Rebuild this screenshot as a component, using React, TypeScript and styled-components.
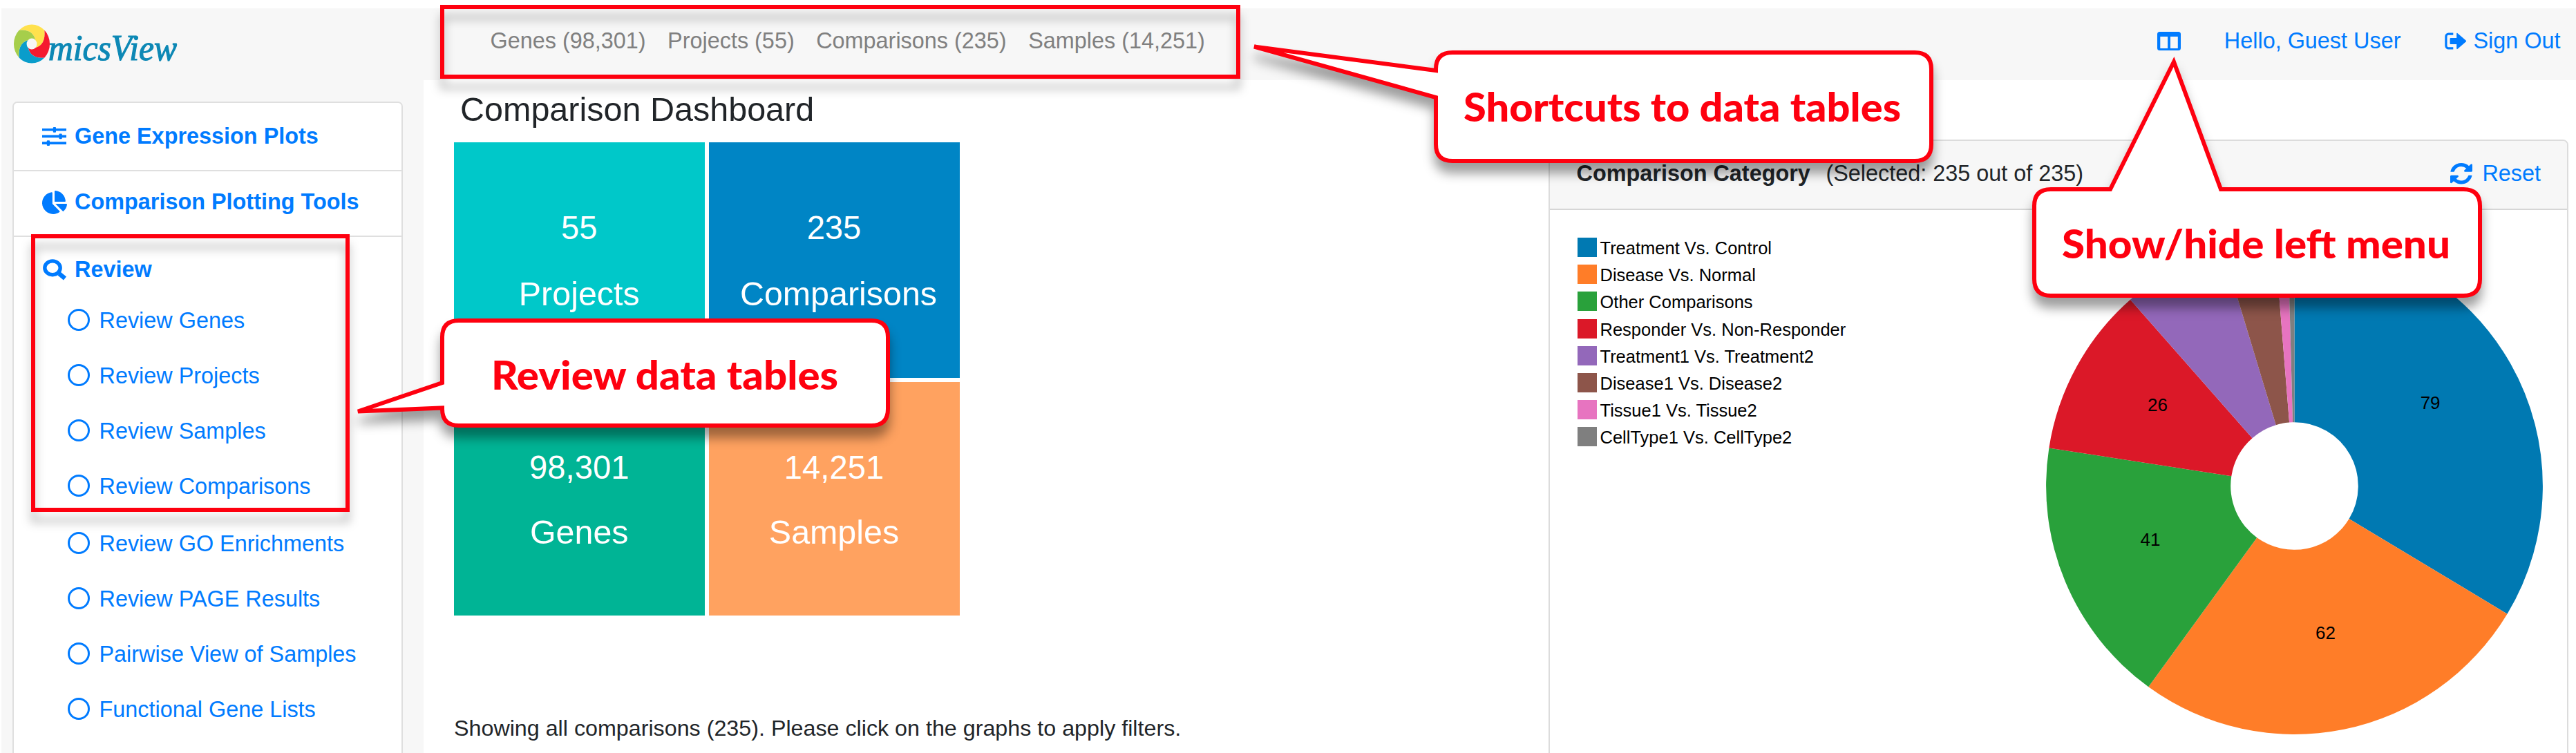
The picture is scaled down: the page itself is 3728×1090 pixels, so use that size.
import React from "react";
import styled, { createGlobalStyle } from "styled-components";
import { FaChartPie } from "react-icons/fa";

const LINK = "#007bff";
const RED = "#fe000f";
const INK = "#212529";

const GlobalStyle = createGlobalStyle`
  *, *::before, *::after { box-sizing: border-box; }
  html, body { margin: 0; padding: 0; background: #fff; }
  body {
    width: 3728px;
    height: 1090px;
    overflow: hidden;
    font-family: "Liberation Sans", Arial, sans-serif;
    font-size: 32.4px;
    color: ${INK};
  }
`;

const Page = styled.div`
  position: relative;
  display: flex;
  flex-direction: column;
  width: 3728px;
  height: 1090px;
  padding: 12px 0 0 2px;
  overflow: hidden;
  background: #fff;
`;

const TopBar = styled.header`
  display: flex;
  align-items: flex-start;
  flex: none;
  height: 104px;
  padding: 0 22.5px 0 16px;
  background: #f7f7f7;
  white-space: nowrap;
`;

const LogoSvg = styled.svg`
  display: block;
  flex: none;
  margin-top: 11px;
`;

const Shortcuts = styled.nav`
  display: flex;
  gap: 31.5px;
  margin: 27px 0 0 441.5px;
  line-height: 40px;
  color: #808080;
`;

const Account = styled.div`
  display: flex;
  align-items: center;
  margin: 27px 0 0 auto;
  line-height: 40px;
  color: ${LINK};
`;

const UserName = styled.span`
  margin: 0 64px 0 62.5px;
`;

const SignOut = styled.a`
  display: flex;
  align-items: center;
  gap: 9px;
`;

const Body = styled.div`
  display: flex;
  flex: 1;
  min-height: 0;
`;

const Sidebar = styled.aside`
  flex: none;
  width: 611px;
  padding: 31px 0 0 16px;
  background: #f7f7f7;
`;

const MenuCard = styled.div`
  width: 565px;
  height: 1000px;
  border: 2px solid #dfdfdf;
  border-radius: 7px;
  background: #fff;
`;

const MenuHeading = styled.div<{ $height: number; $top?: number; $bottom?: number; $divided?: boolean }>`
  display: flex;
  align-items: center;
  box-sizing: content-box;
  height: ${(p) => p.$height - (p.$top ?? 0) - (p.$bottom ?? 0)}px;
  padding: ${(p) => p.$top ?? 0}px 0 ${(p) => p.$bottom ?? 0}px 41px;
  border-bottom: ${(p) => (p.$divided ? "2px solid #dfdfdf" : "none")};
  font-weight: 700;
  color: ${LINK};
  white-space: nowrap;
`;

const IconSlot = styled.span`
  display: flex;
  flex: none;
  width: 47px;
`;

const MenuItem = styled.a<{ $gap?: boolean }>`
  display: flex;
  align-items: center;
  height: 80px;
  margin-top: ${(p) => (p.$gap ? 2.6 : 0)}px;
  padding-left: 78px;
  color: ${LINK};
  white-space: nowrap;
`;

const Ring = styled.span`
  flex: none;
  width: 32px;
  height: 32px;
  margin: 0 13.5px 3px 0;
  border: 3px solid ${LINK};
  border-radius: 50%;
`;

const Main = styled.main`
  display: flex;
  flex: 1;
  min-width: 0;
  padding-left: 44px;
`;

const Overview = styled.section`
  display: flex;
  flex-direction: column;
  width: 1584px;
  padding-top: 13px;
`;

const Title = styled.h1`
  margin: 0 0 19px 9px;
  font-size: 48.5px;
  font-weight: 400;
  line-height: 58px;
`;

const Tiles = styled.div`
  display: grid;
  grid-template-columns: 362.5px 363px;
  grid-template-rows: 341px 338px;
  gap: 6px;
`;

const Tile = styled.div<{ $color: string; $gap: number }>`
  display: flex;
  flex-direction: column;
  align-items: center;
  gap: ${(p) => p.$gap}px;
  padding-top: 95px;
  background: ${(p) => p.$color};
  color: #fff;
  line-height: 58px;
`;

const TileCount = styled.span`
  font-size: 47.2px;
`;

const TileLabel = styled.span<{ $indent?: number }>`
  padding-left: ${(p) => p.$indent ?? 0}px;
  font-size: 48.4px;
`;

const Note = styled.p`
  margin: 143px 0 0;
  font-size: 32.25px;
  line-height: 40px;
`;

const ChartCard = styled.section`
  width: 1476px;
  height: 1000px;
  margin-top: 86px;
  border: 2px solid #dcdcdc;
  border-radius: 8px;
`;

const ChartHeader = styled.div`
  display: flex;
  align-items: center;
  height: 100px;
  padding: 0 38px 3px 38.5px;
  border-bottom: 2px solid #d6d6d6;
  border-radius: 6px 6px 0 0;
  background: #f7f7f7;
  white-space: nowrap;
`;

const ChartName = styled.strong`
  margin-right: 22.5px;
`;

const Reset = styled.a`
  display: flex;
  align-items: center;
  gap: 14px;
  margin-left: auto;
  color: ${LINK};
`;

const ChartBody = styled.div`
  display: flex;
  justify-content: space-between;
  padding: 40px 35px 0 40px;
`;

const Legend = styled.ul`
  display: flex;
  flex-direction: column;
  gap: 11.2px;
  margin: 0;
  padding: 0;
  list-style: none;
  color: #000;
  font-size: 25.5px;
  line-height: 28px;
`;

const LegendRow = styled.li`
  display: flex;
  gap: 4.5px;
  height: 28px;
  white-space: nowrap;

  span { padding-top: 1px; }
`;

const Swatch = styled.i<{ $color: string }>`
  width: 28px;
  height: 28px;
  background: ${(p) => p.$color};
`;

const Frame = styled.div<{ $x: number; $y: number; $w: number; $h: number }>`
  position: absolute;
  left: ${(p) => p.$x}px;
  top: ${(p) => p.$y}px;
  width: ${(p) => p.$w}px;
  height: ${(p) => p.$h}px;
  border: 6px solid ${RED};
  filter: drop-shadow(0 15px 7px rgba(0, 0, 0, 0.28));
  pointer-events: none;
`;

const CalloutLayer = styled.svg`
  position: absolute;
  left: 0;
  top: 0;
  pointer-events: none;

  path {
    fill: #fff;
    stroke: ${RED};
    stroke-width: 6;
    filter: drop-shadow(0 15px 8px rgba(0, 0, 0, 0.38));
  }

  text {
    font-family: Lato, "Open Sans", sans-serif;
    font-weight: 900;
    font-size: 57px;
    fill: ${RED};
  }
`;

const slices = [
  { name: "Treatment Vs. Control", value: 79, color: "#0079b2" },
  { name: "Disease Vs. Normal", value: 62, color: "#ff7d28" },
  { name: "Other Comparisons", value: 41, color: "#29a13b" },
  { name: "Responder Vs. Non-Responder", value: 26, color: "#db1828" },
  { name: "Treatment1 Vs. Treatment2", value: 16, color: "#9368ba" },
  { name: "Disease1 Vs. Disease2", value: 8, color: "#8d554a" },
  { name: "Tissue1 Vs. Tissue2", value: 2, color: "#e774c0" },
  { name: "CellType1 Vs. CellType2", value: 1, color: "#7f7f7f" },
];

const menuItems = [
  "Review Genes",
  "Review Projects",
  "Review Samples",
  "Review Comparisons",
  "Review GO Enrichments",
  "Review PAGE Results",
  "Pairwise View of Samples",
  "Functional Gene Lists",
];

const polar = (r: number, deg: number) => {
  const a = (deg * Math.PI) / 180;
  return `${(r * Math.cos(a)).toFixed(2)} ${(r * Math.sin(a)).toFixed(2)}`;
};

function Logo() {
  const petals: [number, string][] = [
    [-45, "#ffe14d"],
    [45, "#f5192f"],
    [135, "#0a9dcb"],
    [225, "#a6ce4b"],
  ];
  return (
    <LogoSvg width={250} height={84} viewBox="18 23 250 84">
      <g transform="translate(46 63.6) scale(0.93 1)">
        {petals.map(([a, color]) => (
          <path
            key={a}
            fill={color}
            d={`M${polar(28, a - 90)} A28 28 0 0 1 ${polar(28, a)} Q${polar(22, a + 48)} ${polar(8, a + 90)} A8 8 0 0 0 ${polar(8, a)} Q${polar(22, a - 42)} ${polar(28, a - 90)}Z`}
          />
        ))}
      </g>
      <text
        x={70}
        y={86.5}
        textLength={186}
        lengthAdjust="spacingAndGlyphs"
        fontFamily='"Liberation Serif", "Times New Roman", serif'
        fontStyle="italic"
        fontSize={52}
        fill="#0d88b5"
        stroke="#0d88b5"
        strokeWidth={1.2}
      >
        micsView
      </text>
    </LogoSvg>
  );
}

const SlidersIcon = () => (
  <svg width="35" height="27" viewBox="0 0 35 27" fill="currentColor">
    <path d="M0 2h35v3.6H0zM0 11.6h35v3.6H0zM0 21.3h35v3.6H0z" />
    <rect x="15.8" y="0" width="4.2" height="7.7" rx="1" />
    <rect x="24.5" y="9.6" width="4.2" height="7.7" rx="1" />
    <rect x="6.8" y="19.3" width="4.2" height="7.7" rx="1" />
  </svg>
);

const SearchIcon = () => (
  <svg width="36" height="31" viewBox="0 0 36 31" fill="none" stroke="currentColor">
    <ellipse cx="15" cy="12.8" rx="11.2" ry="9.9" strokeWidth="5.4" />
    <path d="M24.5 21L33 28" strokeWidth="6.4" />
  </svg>
);

const ColumnsIcon = () => (
  <svg width="34" height="27" viewBox="0 0 34 27" fill="currentColor">
    <path
      fillRule="evenodd"
      d="M3.5 0h27A3.5 3.5 0 0 1 34 3.5v20a3.5 3.5 0 0 1-3.5 3.5h-27A3.5 3.5 0 0 1 0 23.5v-20A3.5 3.5 0 0 1 3.5 0ZM4.3 7v17h10.8V7ZM19 7v17h10.8V7Z"
    />
  </svg>
);

const SignOutIcon = () => (
  <svg width="32" height="25" viewBox="0 0 32 25">
    <path d="M12.3 2.2H5.5a3.6 3.6 0 0 0-3.6 3.6v13.4a3.6 3.6 0 0 0 3.6 3.6h6.8" fill="none" stroke="currentColor" strokeWidth="3.2" />
    <path d="M8.6 8h8.6V2.2q0-2.4 1.8-.8l11.6 10q1 1 0 2L19 23.6q-1.8 1.6-1.8-.8V17H8.6q-1 0-1-1V9q0-1 1-1Z" fill="currentColor" />
  </svg>
);

const RefreshIcon = () => (
  <svg width="32" height="30.5" viewBox="0 0 1536 1536" preserveAspectRatio="none" fill="currentColor">
    <path d="M1511 928q0 5-1 7-64 268-268 434.500T764 1536q-146 0-282.500-55T238 1324l-129 129q-19 19-45 19t-45-19-19-45V960q0-26 19-45t45-19h448q26 0 45 19t19 45-19 45l-137 137q71 66 161 102t187 36q134 0 250-65t186-179q11-17 53-117 8-23 30-23h192q13 0 22.500 9.500t9.500 22.500zm25-800v448q0 26-19 45t-45 19h-448q-26 0-45-19t-19-45 19-45l138-138Q969 256 768 256q-134 0-250 65T332 500q-11 17-53 117-8 23-30 23H50q-13 0-22.500-9.500T18 608v-7q65-268 270-434.500T768 0q146 0 284 55.500T1297 212l130-129q19-19 45-19t45 19 19 45z" />
  </svg>
);

function Donut() {
  const R = 359.4;
  const r = 92.3;
  const total = slices.reduce((sum, s) => sum + s.value, 0);
  let from = -90;
  return (
    <svg width={719} height={719} viewBox="-359.5 -359.5 719 719">
      {slices.map((s) => {
        const start = from;
        const end = start + (s.value / total) * 360;
        from = end;
        const mid = ((start + end) / 2) * (Math.PI / 180);
        const m = (R + r) / 2;
        return (
          <g key={s.name}>
            <path
              fill={s.color}
              d={`M${polar(R, start)} A${R} ${R} 0 0 1 ${polar(R, end)} L${polar(r, end)} A${r} ${r} 0 0 0 ${polar(r, start)}Z`}
            />
            {s.value > 20 && (
              <text x={m * Math.cos(mid)} y={m * Math.sin(mid)} textAnchor="middle" fontSize={26} fill="#000">
                {s.value}
              </text>
            )}
          </g>
        );
      })}
    </svg>
  );
}

function Callouts() {
  return (
    <CalloutLayer width={3728} height={1090} viewBox="0 0 3728 1090">
      <path d="M664 464H1261Q1285 464 1285 488V592Q1285 616 1261 616H664Q640 616 640 592V590.5L518 595.5L640 554V488Q640 464 664 464Z" />
      <text x={711} y={563.5} textLength={502} lengthAdjust="spacingAndGlyphs">
        Review data tables
      </text>
      <path d="M2102 76H2771Q2795 76 2795 100V209Q2795 233 2771 233H2102Q2078 233 2078 209V141L1815 67.5L2078 102V100Q2078 76 2102 76Z" />
      <text x={2118} y={175.5} textLength={633} lengthAdjust="spacingAndGlyphs">
        Shortcuts to data tables
      </text>
      <path d="M2968 274H3054L3146 89.5L3214 274H3565Q3589 274 3589 298V404Q3589 428 3565 428H2968Q2944 428 2944 404V298Q2944 274 2968 274Z" />
      <text x={2984} y={374} textLength={562} lengthAdjust="spacingAndGlyphs">
        Show/hide left menu
      </text>
    </CalloutLayer>
  );
}

export default function App() {
  return (
    <>
      <GlobalStyle />
      <Page>
        <TopBar>
          <Logo />
          <Shortcuts>
            <span>Genes (98,301)</span>
            <span>Projects (55)</span>
            <span>Comparisons (235)</span>
            <span>Samples (14,251)</span>
          </Shortcuts>
          <Account>
            <ColumnsIcon />
            <UserName>Hello, Guest User</UserName>
            <SignOut>
              <SignOutIcon />
              Sign Out
            </SignOut>
          </Account>
        </TopBar>
        <Body>
          <Sidebar>
            <MenuCard>
              <MenuHeading $height={97} $divided>
                <IconSlot><SlidersIcon /></IconSlot>
                Gene Expression Plots
              </MenuHeading>
              <MenuHeading $height={93} $bottom={4} $divided>
                <IconSlot><FaChartPie size={36} /></IconSlot>
                Comparison Plotting Tools
              </MenuHeading>
              <MenuHeading $height={81.5} $top={13}>
                <IconSlot><SearchIcon /></IconSlot>
                Review
              </MenuHeading>
              {menuItems.map((item, i) => (
                <MenuItem key={item} $gap={i === 4}>
                  <Ring />
                  {item}
                </MenuItem>
              ))}
            </MenuCard>
          </Sidebar>
          <Main>
            <Overview>
              <Title>Comparison Dashboard</Title>
              <Tiles>
                <Tile $color="#00c8c9" $gap={37}>
                  <TileCount>55</TileCount>
                  <TileLabel>Projects</TileLabel>
                </Tile>
                <Tile $color="#0085c5" $gap={37}>
                  <TileCount>235</TileCount>
                  <TileLabel $indent={13}>Comparisons</TileLabel>
                </Tile>
                <Tile $color="#00b495" $gap={34.5}>
                  <TileCount>98,301</TileCount>
                  <TileLabel>Genes</TileLabel>
                </Tile>
                <Tile $color="#ffa260" $gap={34.5}>
                  <TileCount>14,251</TileCount>
                  <TileLabel>Samples</TileLabel>
                </Tile>
              </Tiles>
              <Note>Showing all comparisons (235). Please click on the graphs to apply filters.</Note>
            </Overview>
            <ChartCard>
              <ChartHeader>
                <ChartName>Comparison Category</ChartName>
                <span>(Selected: 235 out of 235)</span>
                <Reset>
                  <RefreshIcon />
                  Reset
                </Reset>
              </ChartHeader>
              <ChartBody>
                <Legend>
                  {slices.map((s) => (
                    <LegendRow key={s.name}>
                      <Swatch $color={s.color} />
                      <span>{s.name}</span>
                    </LegendRow>
                  ))}
                </Legend>
                <Donut />
              </ChartBody>
            </ChartCard>
          </Main>
        </Body>
        <Frame $x={45} $y={339} $w={461} $h={402} />
        <Frame $x={637} $y={7} $w={1158} $h={107} />
        <Callouts />
      </Page>
    </>
  );
}
